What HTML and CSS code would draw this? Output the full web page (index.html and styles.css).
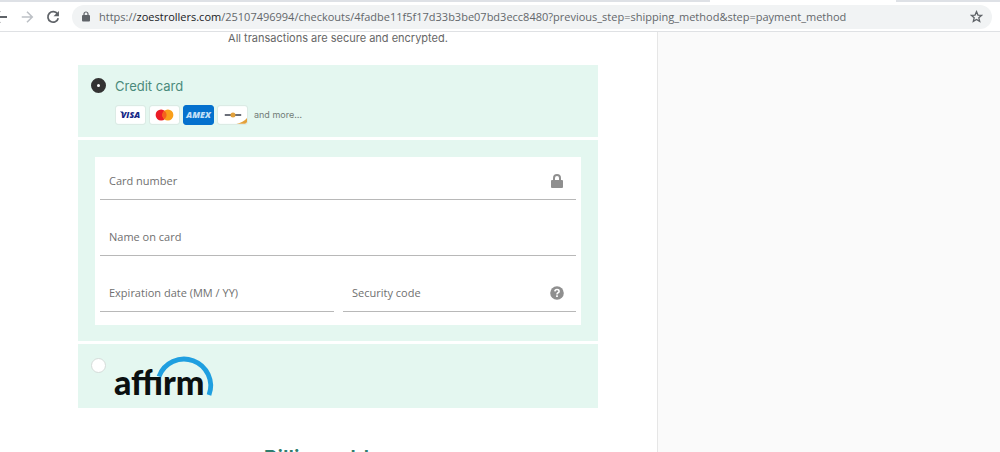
FILE: index.html
```
<!DOCTYPE html>
<html lang="en">
<head>
  <meta charset="UTF-8">
  <title>Checkout - Payment</title>
  <link rel="stylesheet" href="styles.css">
</head>
<body>

<!-- browser bar -->
<div class="tabs"><div class="tab-active"></div></div>
<header class="toolbar">
  <button class="nav-btn back" aria-label="Back">
    <svg width="16" height="16" viewBox="0 0 16 16"><path d="M15 8H2M8 2L2 8l6 6" fill="none" stroke="#5f6368" stroke-width="1.8"/></svg>
  </button>
  <button class="nav-btn" aria-label="Forward">
    <svg width="14" height="14" viewBox="0 0 16 16"><path d="M2 8h12M8 2l6 6-6 6" fill="none" stroke="#bdc1c6" stroke-width="1.8"/></svg>
  </button>
  <button class="nav-btn" aria-label="Reload">
    <svg width="14" height="14" viewBox="0 0 16 16"><path d="M13.2 4.6A6 6 0 1 0 14 9.4" fill="none" stroke="#5f6368" stroke-width="2"/><path d="M14.8 1v6.2H8.6z" fill="#5f6368"/></svg>
  </button>
  <div class="address">
    <svg width="8" height="11" viewBox="0 0 8 11"><path d="M2 5V3a2 2 0 0 1 4 0v2" fill="none" stroke="#5f6368" stroke-width="1.2"/><rect y="4" width="8" height="6.5" rx="1" fill="#5f6368"/></svg>
    <span class="url">https://<b>zoestrollers.com</b>/25107496994/checkouts/4fadbe11f5f17d33b3be07bd3ecc8480?previous_step=shipping_method&amp;step=payment_method</span>
    <button class="nav-btn" aria-label="Bookmark">
      <svg width="13" height="13" viewBox="0 0 24 24"><path d="M12 3l2.700 6.300 6.800.6-5.200 4.500 1.600 6.700L12 17.500l-5.900 3.600 1.600-6.700L2.500 9.900l6.800-.6z" fill="none" stroke="#5f6368" stroke-width="2.400"/></svg>
    </button>
  </div>
</header>

<div class="page">
  <main class="main">
    <p class="note">All transactions are secure and encrypted.</p>

    <form class="payment">
      <div class="row">
        <input type="radio" name="gateway" id="credit" checked>
        <div class="method">
          <label for="credit">Credit card</label>
          <div class="brands">
            <svg class="brand" viewBox="0 0 30 18" role="img" aria-label="Visa"><rect width="30" height="18" rx="2" fill="#fff"/><text x="15" y="12.500" class="visa">VISA</text><path d="M4 5.500h3l1 3z" fill="#142787"/></svg>
            <svg class="brand" viewBox="0 0 30 18" role="img" aria-label="Mastercard"><rect width="30" height="18" rx="2" fill="#fff"/><circle cx="11.500" cy="9" r="5.700" fill="#eb1c26"/><circle cx="18.500" cy="9" r="5.700" fill="#f99f1b"/><path d="M15 4.500a5.700 5.700 0 0 1 0 9a5.700 5.700 0 0 1 0-9z" fill="#f5601f"/></svg>
            <svg class="brand brand-blue" viewBox="0 0 30 18" role="img" aria-label="American Express"><rect width="30" height="18" fill="#0571ce"/><text x="15" y="12.500" class="amex">AMEX</text></svg>
            <svg class="brand" viewBox="0 0 30 18" role="img" aria-label="Discover"><rect width="30" height="18" rx="2" fill="#fff"/><path d="M7 9h17" stroke="#3a3f4c" stroke-width="1.600"/><circle cx="15.500" cy="9" r="2.600" fill="#e2a13b"/><path d="M30 12v4a2 2 0 0 1-2 2H19q7-1 11-6z" fill="#e2a13b"/></svg>
            <span class="more">and more…</span>
          </div>
        </div>
      </div>

      <div class="row row-fields">
        <div class="fields">
          <div class="field wide">
            <input type="text" placeholder="Card number" aria-label="Card number">
            <svg width="14" height="14" viewBox="0 0 14 14"><path d="M4 7V4a3 3 0 0 1 6 0v3" fill="none" stroke="#8f8f8f" stroke-width="2"/><rect x="1" y="6" width="12" height="8" rx="1" fill="#8f8f8f"/></svg>
          </div>
          <div class="field wide">
            <input type="text" placeholder="Name on card" aria-label="Name on card">
          </div>
          <div class="field">
            <input type="text" placeholder="Expiration date (MM / YY)" aria-label="Expiration date (MM / YY)">
          </div>
          <div class="field">
            <input type="text" placeholder="Security code" aria-label="Security code">
            <svg width="14" height="14" viewBox="0 0 14 14"><circle cx="7" cy="7" r="6.800" fill="#8f8f8f"/><path d="M4.900 5.400Q5 3.500 7 3.500t2.100 1.700Q9.100 6.300 8 6.800 7 7.300 7 8.400" fill="none" stroke="#fff" stroke-width="1.600"/><rect x="6.100" y="9.300" width="1.800" height="1.700" fill="#fff"/></svg>
          </div>
        </div>
      </div>

      <div class="row row-affirm">
        <input type="radio" name="gateway" id="affirm">
        <label for="affirm" aria-label="Affirm">
          <svg class="affirm" width="100" height="40" viewBox="0 0 100 40">
            <path d="M44 18.500A26 26 0 0 1 94 37" fill="none" stroke="#1f9fe0" stroke-width="4.800"/>
            <text x="-1" y="37">affırm</text>
          </svg>
        </label>
      </div>
    </form>

    <h2 class="heading">Billing address</h2>
  </main>
  <aside class="sidebar"></aside>
</div>

</body>
</html>
```
FILE: styles.css
```
* {
  margin: 0;
  padding: 0;
  box-sizing: border-box;
}

body {
  display: flex;
  flex-direction: column;
  height: 100vh;
  overflow: hidden;
  background: #fff;
  font-family: "Open Sans", sans-serif;
}

svg {
  display: block;
  flex: none;
}

/* browser bar */
.tabs {
  flex: none;
  height: 2px;
  padding-left: 71%;
  background: #dee1e6;
}

.tab-active {
  width: 64%;
  height: 2px;
  background: #fff;
}

.toolbar {
  flex: none;
  display: flex;
  align-items: center;
  gap: 12px;
  height: 30px;
  padding-right: 8px;
  border-bottom: 1px solid #dfe1e4;
}

.nav-btn {
  border: 0;
  background: none;
}

.back {
  margin-left: -8px;
}

.address {
  flex: 1;
  display: flex;
  align-items: center;
  gap: 9px;
  height: 24px;
  padding: 0 9px 0 10px;
  border-radius: 12px;
  background: #f1f3f4;
}

.url {
  flex: 1;
  font-size: 11px;
  line-height: 24px;
  white-space: nowrap;
  color: #63676b;
}

.url b {
  font-weight: normal;
  color: #202124;
}

/* checkout page */
.page {
  flex: 1;
  display: flex;
  min-height: 0;
}

.main {
  flex: none;
  width: 65.8%;
  padding: 0 59px 0 78px;
  border-right: 1px solid #e6e6e6;
}

.sidebar {
  flex: 1;
  background: #fafafa;
}

.note {
  margin-bottom: 21px;
  font-family: Inter, sans-serif;
  font-size: 11px;
  line-height: 12px;
  text-align: center;
  color: #666;
}

.payment {
  display: flex;
  flex-direction: column;
  gap: 3px;
}

.row {
  display: flex;
  gap: 9px;
  padding: 13px 13px 12px;
  background: #e4f7f0;
}

input[type="radio"] {
  flex: none;
  appearance: none;
  width: 15px;
  height: 15px;
  border: 1px solid #d5dcd9;
  border-radius: 50%;
  background: #fff;
}

input[type="radio"]:checked {
  border: 6px solid #333;
}

.method label {
  display: block;
  font-family: Inter, sans-serif;
  font-size: 13px;
  line-height: 16px;
  color: #4a8a7b;
}

.brands {
  display: flex;
  align-items: center;
  gap: 3px;
  margin-top: 11px;
}

.brand {
  width: 31px;
  height: 20px;
  border: 1px solid #dcebe5;
  border-radius: 3px;
}

.brand-blue {
  border-color: #0571ce;
  background: #0571ce;
}

.visa,
.amex {
  font-family: "Open Sans", sans-serif;
  font-style: italic;
  font-weight: 800;
  text-anchor: middle;
}

.visa {
  font-size: 9px;
  fill: #142787;
}

.amex {
  font-size: 9px;
  fill: #c4e0f7;
}

.more {
  margin-left: 3px;
  font-family: Inter, sans-serif;
  font-size: 9px;
  line-height: 20px;
  color: #717b77;
}

.row-fields {
  padding: 17px 17px 16px;
}

.fields {
  flex: 1;
  display: grid;
  grid-template-columns: 234px 1fr;
  gap: 13px 9px;
  padding: 0 5px 13px;
  background: #fff;
}

.field {
  display: flex;
  align-items: center;
  height: 43px;
  padding: 6px 12px 0 9px;
  border-bottom: 1px solid #b8b8b8;
}

.wide {
  grid-column: span 2;
}

.field input {
  flex: 1;
  min-width: 0;
  border: 0;
  outline: 0;
  font-family: "Open Sans", sans-serif;
  font-size: 11px;
  line-height: 16px;
}

.field input::placeholder {
  color: #707070;
}

.row-affirm {
  padding: 14px 13px 10px;
}

.affirm {
  overflow: visible;
}

.affirm text {
  font-family: Lato, sans-serif;
  font-size: 34px;
  font-weight: 900;
  fill: #0b1010;
}

.heading {
  margin-top: 39px;
  font-family: Inter, sans-serif;
  font-size: 21px;
  font-weight: 600;
  line-height: 24px;
  text-align: center;
  color: #2f7d6d;
}
```
